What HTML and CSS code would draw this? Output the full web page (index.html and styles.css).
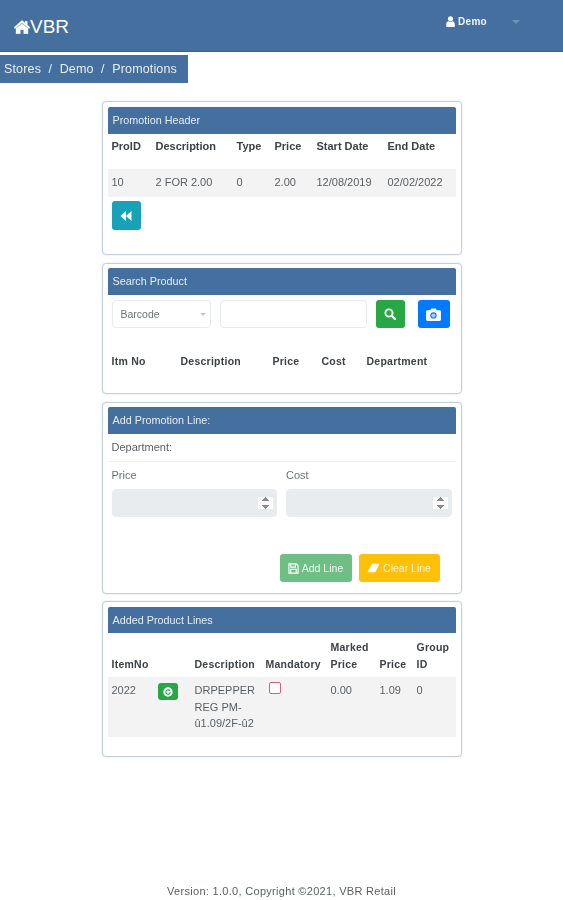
FILE: index.html
```html
<!DOCTYPE html>
<html lang="en">
<head>
<meta charset="utf-8">
<title>Promotions</title>
<link rel="stylesheet" href="styles.css">
</head>
<body>
<div class="page">
  <nav class="navbar">
    <a class="brand">
      <svg class="home-icon" viewBox="0 0 24 20"><path d="M12 0 L16.5 3.9 V1.5 H20 V7 L24 10.6 L22.6 12.6 L12 3.8 L1.4 12.6 L0 10.6 Z M12 5 L21 12.4 V20 H14.5 V14 H9.5 V20 H3 V12.4 Z" fill="#fff" stroke="#fff" stroke-width="0.5"/></svg><span>VBR</span>
    </a>
    <div class="user">
      <svg class="user-icon" viewBox="0 0 10 12"><circle cx="5" cy="3" r="2.8" fill="#fff"/><path d="M0.3 12 V8.6 C0.3 6.8 1.6 5.8 3 5.6 C4.2 6.4 5.8 6.4 7 5.6 C8.4 5.8 9.7 6.8 9.7 8.6 V12 Z" fill="#fff"/></svg>
      <span class="user-name">Demo</span>
      <span class="caret"></span>
    </div>
  </nav>

  <div class="crumb-row">
    <div class="crumbs"><span>Stores</span><span>/</span><span>Demo</span><span>/</span><span>Promotions</span></div>
  </div>

  <main class="cards">
    <section class="card card-header-info">
      <h2 class="card-title">Promotion Header</h2>
      <table class="tbl tbl-promo">
        <thead><tr><th>ProID</th><th>Description</th><th>Type</th><th>Price</th><th>Start Date</th><th>End Date</th></tr></thead>
        <tbody><tr><td>10</td><td>2 FOR 2.00</td><td>0</td><td>2.00</td><td>12/08/2019</td><td>02/02/2022</td></tr></tbody>
      </table>
      <button class="btn btn-back" type="button" aria-label="Back">
        <svg viewBox="0 0 12 10" width="12" height="10"><path d="M6 0 V10 L0.5 5 Z M11.5 0 V10 L6 5 Z" fill="#fff"/></svg>
      </button>
    </section>

    <section class="card card-search">
      <h2 class="card-title">Search Product</h2>
      <div class="search-row">
        <div class="select"><span>Barcode</span><span class="select-caret"></span></div>
        <input class="field search-input" type="text">
        <button class="btn btn-search" type="button" aria-label="Search">
          <svg viewBox="0 0 14 14" width="12" height="12"><circle cx="5.8" cy="5.8" r="4.2" fill="none" stroke="#fff" stroke-width="2.2"/><path d="M9 9 L13 13" stroke="#fff" stroke-width="2.6" stroke-linecap="round"/></svg>
        </button>
        <button class="btn btn-camera" type="button" aria-label="Scan">
          <svg viewBox="0 0 16 14" width="15" height="13"><path d="M1.5 2.5 H4.5 L5.5 0.5 H10.5 L11.5 2.5 H14.5 A1.5 1.5 0 0 1 16 4 V12.5 A1.5 1.5 0 0 1 14.5 14 H1.5 A1.5 1.5 0 0 1 0 12.5 V4 A1.5 1.5 0 0 1 1.5 2.5 Z" fill="#fff"/><circle cx="8" cy="8" r="3.4" fill="#007bff"/><circle cx="8" cy="8" r="2.2" fill="#a9cffa"/></svg>
        </button>
      </div>
      <table class="tbl tbl-search">
        <thead><tr><th>Itm No</th><th>Description</th><th>Price</th><th>Cost</th><th>Department</th></tr></thead>
      </table>
    </section>

    <section class="card card-line">
      <h2 class="card-title">Add Promotion Line:</h2>
      <div class="dept">Department:</div>
      <div class="form-row">
        <label class="form-group"><span>Price</span><input class="field num" type="number" disabled></label>
        <label class="form-group"><span>Cost</span><input class="field num" type="number" disabled></label>
      </div>
      <div class="actions">
        <button class="btn btn-add" type="button">
          <svg viewBox="0 0 12 12" width="11" height="11"><path d="M1 1 H9 L11 3 V11 H1 Z M3 1.5 V4.5 H8 V1.5 M3 11 V7 H9 V11" fill="none" stroke="#fff" stroke-width="1.2"/></svg>
          Add Line
        </button>
        <button class="btn btn-clear" type="button">
          <svg viewBox="0 0 14 10" width="13" height="10"><path d="M5.5 0.5 H13.5 L9 9.5 H0.5 Z" fill="#fff"/></svg>
          Clear Line
        </button>
      </div>
    </section>

    <section class="card card-lines">
      <h2 class="card-title">Added Product Lines</h2>
      <table class="tbl tbl-lines">
        <thead><tr><th>ItemNo</th><th></th><th>Description</th><th>Mandatory</th><th>Marked Price</th><th>Price</th><th>Group ID</th></tr></thead>
        <tbody><tr>
          <td>2022</td>
          <td><button class="btn btn-refresh" type="button" aria-label="Update"><svg viewBox="0 0 12 12" width="10" height="10"><circle cx="6" cy="6" r="5.6" fill="#fff"/><path d="M8.6 6 A2.6 2.6 0 1 1 7.6 4" fill="none" stroke="#28a745" stroke-width="1.3"/><path d="M6.6 2.6 L9 3.2 L7.8 5.2 Z" fill="#28a745"/></svg></button></td>
          <td>DRPEPPER REG PM-û1.09/2F-û2</td>
          <td><span class="check"></span></td>
          <td>0.00</td>
          <td>1.09</td>
          <td>0</td>
        </tr></tbody>
      </table>
    </section>
  </main>

  <footer class="footer">Version: 1.0.0, Copyright ©2021, VBR Retail</footer>
</div>
</body>
</html>
```
FILE: styles.css
```css
* { box-sizing: border-box; }

html, body { margin: 0; padding: 0; background: #fff; }

body {
  font-family: "Liberation Sans", Arial, sans-serif;
  font-size: 11px;
  color: #4a4f54;
  overflow: hidden;
}

.page {
  height: 900px;
  display: flex;
  flex-direction: column;
  filter: blur(0.6px);
}

/* top bar */
.navbar {
  height: 52px;
  flex: none;
  display: flex;
  align-items: flex-start;
  justify-content: space-between;
  background: #446f9e;
  border-bottom: 1px solid #3a628e;
  color: #fff;
}
.brand {
  display: flex;
  align-items: center;
  margin: 16px 0 0 14px;
  font-size: 19px;
  line-height: 22px;
  color: #fff;
}
.home-icon { width: 16px; height: 14px; }
.user {
  display: flex;
  align-items: center;
  margin: 15px 43px 0 0;
  height: 12px;
}
.user-icon { width: 9px; height: 11px; margin-right: 3px; }
.user-name { font-size: 10px; font-weight: 700; letter-spacing: 0.3px; color: #f3f5f8; }
.caret {
  width: 0;
  height: 0;
  margin: 1px 0 0 25px;
  border-left: 4px solid transparent;
  border-right: 4px solid transparent;
  border-top: 4px solid #6f91b6;
}

/* breadcrumb */
.crumb-row { display: flex; margin-top: 3px; flex: none; }
.crumbs {
  display: flex;
  gap: 7.5px;
  height: 28px;
  width: 188px;
  align-items: center;
  padding-left: 4px;
  background: #446f9e;
  color: #e9eef4;
  font-size: 12.5px;
  letter-spacing: 0.15px;
  white-space: nowrap;
}

/* cards */
.cards {
  width: 360px;
  margin: 18px auto 0;
  display: flex;
  flex-direction: column;
  gap: 8px;
  flex: none;
}
.card {
  border: 1px solid #c3cfdf;
  border-radius: 4px;
  padding: 5px;
  box-shadow: 0 0 2px #d5dce6;
  background: #fff;
}
.card-title {
  margin: 0;
  height: 27px;
  line-height: 26px;
  padding-left: 5px;
  background: #446f9e;
  border-radius: 2px 2px 0 0;
  color: #e6ecf3;
  font-size: 10.8px;
  font-weight: 400;
}
.card-header-info { height: 154px; }
.card-search { height: 131px; padding-top: 4px; }
.card-line { height: 192px; margin-bottom: -1px; padding-top: 4px; }
.card-lines { height: 156px; }
.card-lines .card-title { height: 26px; line-height: 26px; }

/* tables */
.tbl {
  width: 100%;
  border-collapse: collapse;
  table-layout: fixed;
}
.tbl th, .tbl td {
  padding: 0 0 0 4px;
  text-align: left;
  vertical-align: top;
}
.tbl th { font-weight: 700; color: #3d4246; }
.tbl td { color: #5a5f64; }
.tbl tbody tr { background: #f3f3f3; }

.tbl-promo th { height: 35px; padding-top: 6px; line-height: 13px; font-weight: 700; }
.tbl-promo td { height: 28px; line-height: 27px; }
.tbl-promo th:nth-child(1) { width: 44px; }
.tbl-promo th:nth-child(2) { width: 81px; }
.tbl-promo th:nth-child(3) { width: 38px; }
.tbl-promo th:nth-child(4) { width: 42px; }
.tbl-promo th:nth-child(5) { width: 71px; }

.tbl-search { margin-top: 26px; }
.tbl-search th { line-height: 14px; font-size: 10.5px; letter-spacing: 0.25px; }
.tbl-search th:nth-child(1) { width: 69px; }
.tbl-search th:nth-child(2) { width: 92px; }
.tbl-search th:nth-child(3) { width: 49px; }
.tbl-search th:nth-child(4) { width: 45px; }

.tbl-lines { margin-top: 5px; }
.tbl-lines th {
  vertical-align: bottom;
  line-height: 17px;
  height: 39px;
  padding-bottom: 4px;
  font-size: 10.5px;
  letter-spacing: 0.25px;
}
.tbl-lines td { line-height: 16.5px; height: 60px; padding-top: 5px; padding-bottom: 4px; }
.tbl-lines th:nth-child(1) { width: 46px; }
.tbl-lines th:nth-child(2) { width: 37px; }
.tbl-lines th:nth-child(3) { width: 71px; }
.tbl-lines th:nth-child(4) { width: 65px; }
.tbl-lines th:nth-child(5) { width: 49px; }
.tbl-lines th:nth-child(6) { width: 37px; }

/* buttons */
.btn {
  display: inline-flex;
  align-items: center;
  justify-content: center;
  gap: 3px;
  border: 0;
  border-radius: 3px;
  padding: 0;
  color: #fff;
  font: inherit;
}
.btn-back { width: 29px; height: 29px; margin: 4px 0 0 4px; background: #17a2b8; }
.btn-search { width: 29px; height: 28px; background: #28a745; margin-left: 9px; }
.btn-camera { width: 32px; height: 28px; background: #007bff; margin-left: 13px; }
.btn-add { width: 72px; height: 28px; background: #6fbf85; color: #eef7f0; font-size: 10.5px; }
.btn-clear { width: 81px; height: 28px; background: #ffc107; color: #fff3cf; font-size: 10.5px; margin-left: 7px; }
.btn-refresh { width: 20px; height: 17px; background: #28a745; margin-top: 1px; }

/* search row */
.search-row { display: flex; align-items: flex-start; margin: 5px 0 0 4px; }
.select {
  width: 99px;
  height: 28px;
  display: flex;
  align-items: center;
  justify-content: space-between;
  padding: 0 4px 0 8px;
  border: 1px solid #e8ebee;
  border-radius: 4px;
  color: #6c7278;
  font-size: 10.5px;
}
.select-caret {
  width: 0;
  height: 0;
  border-left: 3.5px solid transparent;
  border-right: 3.5px solid transparent;
  border-top: 3.5px solid #c2c6ca;
}
.field {
  height: 28px;
  border: 1px solid #e8ebee;
  border-radius: 4px;
  background: #fff;
  padding: 0 6px;
  font: inherit;
}
.search-input { width: 147px; margin-left: 9px; }

/* add line */
.dept {
  height: 28px;
  line-height: 27px;
  padding-left: 4px;
  border-bottom: 1px solid #eef0f2;
  color: #5a5f64;
}
.form-row { display: flex; gap: 9px; margin: 6px 4px 0; }
.form-group { display: flex; flex-direction: column; flex: 1; color: #6c7278; }
.form-group span { height: 21px; line-height: 14px; }
.num { width: 100%; background: #e9ecef; border-color: #e9ecef; padding-right: 3px; }
.num::-webkit-inner-spin-button { opacity: 1; }
.actions { display: flex; justify-content: flex-end; margin: 37px 16px 0 0; }

/* misc */
.check {
  display: block;
  width: 12px;
  height: 12px;
  margin-left: 3px;
  border: 1.3px solid #d9646f;
  border-radius: 2px;
  background: #fff;
}
.tbl-lines td:nth-child(4) { padding-left: 4px; }

.footer {
  margin-top: auto;
  padding-bottom: 2px;
  text-align: center;
  font-size: 11px;
  line-height: 14px;
  letter-spacing: 0.3px;
  color: #5a5f64;
}
```
